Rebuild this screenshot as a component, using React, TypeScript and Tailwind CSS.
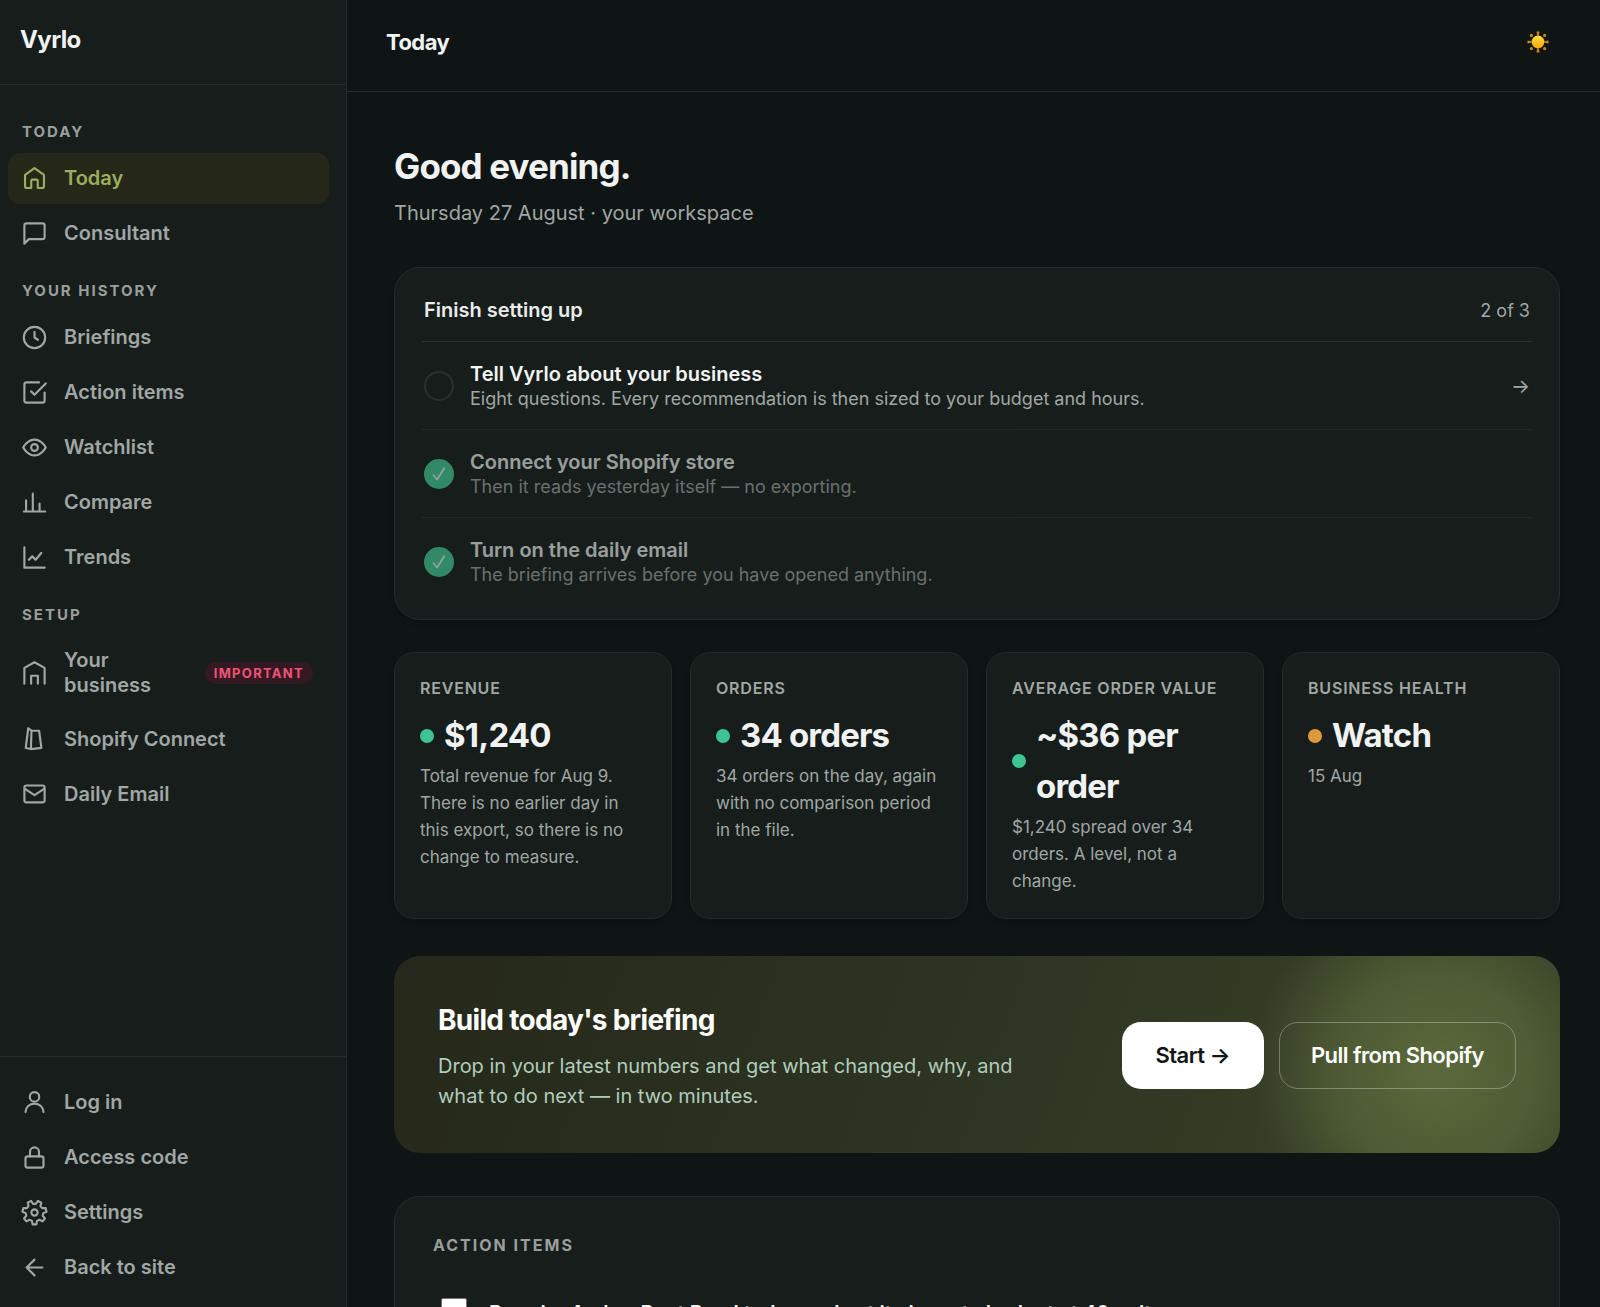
import type { ReactNode } from "react";

type NavItem = {
  label: string;
  icon: ReactNode;
  active?: boolean;
  badge?: string;
};

type NavGroup = {
  title: string;
  items: NavItem[];
};

type SetupStep = {
  title: string;
  text: string;
  done: boolean;
};

type Stat = {
  label: string;
  value: string;
  text: string;
  tone: "good" | "watch";
};

// closed outline of a seven-tooth gear, one tooth pointing down
function gearPath(teeth = 7) {
  const points: string[] = [];

  for (let i = 0; i < teeth; i++) {
    const middle = 90 + (i * 360) / teeth;
    for (const [offset, radius] of [
      [-17, 7.8],
      [-9, 10.7],
      [9, 10.7],
      [17, 7.8],
    ]) {
      const angle = ((middle + offset) * Math.PI) / 180;
      points.push(`${(12 + radius * Math.cos(angle)).toFixed(2)} ${(12 + radius * Math.sin(angle)).toFixed(2)}`);
    }
  }

  return `M${points.join("L")}z`;
}

function Icon({ children }: { children: ReactNode }) {
  return (
    <svg
      viewBox="0 0 24 24"
      className="size-[27px] shrink-0"
      fill="none"
      stroke="currentColor"
      strokeWidth={1.9}
      strokeLinecap="round"
      strokeLinejoin="round"
      aria-hidden="true"
    >
      {children}
    </svg>
  );
}

const NAV_GROUPS: NavGroup[] = [
  {
    title: "Today",
    items: [
      {
        label: "Today",
        active: true,
        icon: (
          <Icon>
            <path d="M3.6 8.700 12 2.800l8.400 5.900v10.100a1.600 1.600 0 0 1-1.600 1.600h-3.900V14a1 1 0 0 0-1-1h-3.800a1 1 0 0 0-1 1v6.400H5.200a1.600 1.600 0 0 1-1.600-1.600z" />
          </Icon>
        ),
      },
      {
        label: "Consultant",
        icon: (
          <Icon>
            <path d="M21 15a2 2 0 0 1-2 2H7l-4 4V5a2 2 0 0 1 2-2h14a2 2 0 0 1 2 2z" />
          </Icon>
        ),
      },
    ],
  },
  {
    title: "Your history",
    items: [
      {
        label: "Briefings",
        icon: (
          <Icon>
            <circle cx="12" cy="12" r="9.5" />
            <path d="M12 7v5l3 2" />
          </Icon>
        ),
      },
      {
        label: "Action items",
        icon: (
          <Icon>
            <path d="m9 11 3 3L22 4" />
            <path d="M21 12v7a2 2 0 0 1-2 2H5a2 2 0 0 1-2-2V5a2 2 0 0 1 2-2h11" />
          </Icon>
        ),
      },
      {
        label: "Watchlist",
        icon: (
          <Icon>
            <path d="M2 12s3.6-7 10-7 10 7 10 7-3.6 7-10 7-10-7-10-7z" />
            <circle cx="12" cy="12" r="3" />
          </Icon>
        ),
      },
      {
        label: "Compare",
        icon: (
          <Icon>
            <path d="M2.5 20h19M4.5 20V10M10.5 20V4M16.5 20v-7" />
          </Icon>
        ),
      },
      {
        label: "Trends",
        icon: (
          <Icon>
            <path d="M3 3v18h18" />
            <path d="m7 14 3-3 3 3 5-6" />
          </Icon>
        ),
      },
    ],
  },
  {
    title: "Setup",
    items: [
      {
        label: "Your business",
        badge: "Important",
        icon: (
          <Icon>
            <path d="M3 21V7l9-5 9 5v14" />
            <path d="M9 21v-7h6v7" />
          </Icon>
        ),
      },
      {
        label: "Shopify Connect",
        icon: (
          <Icon>
            <path d="M6.4 2 4.2 19.6l4.6.9 9.3-1-2-15.3H9.3z" />
            <path d="M9.3 4.2 8.8 20.5" />
          </Icon>
        ),
      },
      {
        label: "Daily Email",
        icon: (
          <Icon>
            <rect x="3" y="4" width="18" height="15" rx="2" />
            <path d="m3.5 7 8.5 5.500 8.500-5.500" />
          </Icon>
        ),
      },
    ],
  },
];

const FOOTER_ITEMS: NavItem[] = [
  {
    label: "Log in",
    icon: (
      <Icon>
        <circle cx="12" cy="7" r="4.200" />
        <path d="M4 20.500c0-4.400 3.600-7.500 8-7.500s8 3.100 8 7.500" />
      </Icon>
    ),
  },
  {
    label: "Access code",
    icon: (
      <Icon>
        <rect x="4" y="11" width="16" height="10" rx="2" />
        <path d="M8 11V7a4 4 0 0 1 8 0v4" />
      </Icon>
    ),
  },
  {
    label: "Settings",
    icon: (
      <Icon>
        <circle cx="12" cy="12" r="2.8" />
        <path d={gearPath()} />
      </Icon>
    ),
  },
  {
    label: "Back to site",
    icon: (
      <Icon>
        <path d="M19 12H5M12 19l-7-7 7-7" />
      </Icon>
    ),
  },
];

const STEPS: SetupStep[] = [
  {
    title: "Tell Vyrlo about your business",
    text: "Eight questions. Every recommendation is then sized to your budget and hours.",
    done: false,
  },
  {
    title: "Connect your Shopify store",
    text: "Then it reads yesterday itself — no exporting.",
    done: true,
  },
  {
    title: "Turn on the daily email",
    text: "The briefing arrives before you have opened anything.",
    done: true,
  },
];

const STATS: Stat[] = [
  {
    label: "Revenue",
    value: "$1,240",
    text: "Total revenue for Aug 9. There is no earlier day in this export, so there is no change to measure.",
    tone: "good",
  },
  {
    label: "Orders",
    value: "34 orders",
    text: "34 orders on the day, again with no comparison period in the file.",
    tone: "good",
  },
  {
    label: "Average order value",
    value: "~$36 per order",
    text: "$1,240 spread over 34 orders. A level, not a change.",
    tone: "good",
  },
  { label: "Business health", value: "Watch", text: "15 Aug", tone: "watch" },
];

function NavLink({ item }: { item: NavItem }) {
  return (
    <a
      href="#"
      className={`flex items-center gap-4 rounded-xl py-3 pr-4 pl-[13px] text-xl leading-[25px] font-semibold ${
        item.active ? "bg-[#252818] text-[#9cad5e]" : "text-[#a0a7a4]"
      }`}
    >
      {item.icon}
      <span className="flex-1">{item.label}</span>
      {item.badge && (
        <span className="rounded-full bg-[#351922] px-[9px] text-[13px] leading-[22px] font-bold tracking-widest text-[#ee5478] uppercase">
          {item.badge}
        </span>
      )}
    </a>
  );
}

function Sidebar() {
  return (
    <aside className="flex w-[347px] shrink-0 flex-col border-r border-[#272d2c] bg-[#171d1b]">
      <div className="border-b border-[#272d2c] px-5 pt-6 pb-[29px] text-2xl leading-[31px] font-bold tracking-tight text-[#f0f3f2]">
        Vyrlo
      </div>

      <nav className="flex-1 overflow-hidden pt-[15px] pr-[17px] pl-2">
        {NAV_GROUPS.map((group) => (
          <div key={group.title}>
            <h2 className="px-[14px] pt-[22px] pb-[11px] text-[15px] leading-5 font-bold tracking-[2px] text-[#9a9f9d] uppercase">
              {group.title}
            </h2>
            <div className="flex flex-col gap-1">
              {group.items.map((item) => (
                <NavLink key={item.label} item={item} />
              ))}
            </div>
          </div>
        ))}
      </nav>

      <div className="flex flex-col gap-1 border-t border-[#272d2c] pt-5 pr-[17px] pb-[14px] pl-2">
        {FOOTER_ITEMS.map((item) => (
          <NavLink key={item.label} item={item} />
        ))}
      </div>
    </aside>
  );
}

function Sun() {
  return (
    <svg viewBox="0 0 24 24" className="size-6" aria-hidden="true">
      <defs>
        <linearGradient id="sun" x1="0" y1="0" x2="0" y2="1">
          <stop offset="0" stopColor="#ffe23a" />
          <stop offset="1" stopColor="#f7a416" />
        </linearGradient>
      </defs>
      <g fill="#c98712">
        <path d="M10.5 1.5h3l-.7 4h-1.6zM10.5 22.5h3l-.7-4h-1.6zM1.5 10.5v3l4-.7v-1.6zM22.5 10.5v3l-4-.7v-1.6z" />
        <circle cx="5.4" cy="5.4" r="1.6" />
        <circle cx="18.6" cy="5.4" r="1.6" />
        <circle cx="5.4" cy="18.6" r="1.6" />
        <circle cx="18.6" cy="18.6" r="1.6" />
      </g>
      <circle cx="12" cy="12" r="6.4" fill="url(#sun)" />
    </svg>
  );
}

function StepMark({ done }: { done: boolean }) {
  if (!done) {
    return <span className="size-[30px] shrink-0 rounded-full border-2 border-[#2b3130]" />;
  }

  return (
    <span className="flex size-[30px] shrink-0 items-center justify-center rounded-full bg-[#44d19c] text-[#e6fff4]">
      <svg viewBox="0 0 14 14" className="size-[14px]" fill="none" stroke="currentColor" strokeWidth={1.7} strokeLinecap="round" strokeLinejoin="round">
        <path d="M1.5 8.2 5 12.5 12.3 1.2" />
      </svg>
    </span>
  );
}

function SetupCard() {
  return (
    <section className="mt-[39px] rounded-[26px] border border-[#262c2b] bg-[#171d1b] px-[27px] pt-7 pb-[14px] shadow-md">
      <div className="flex items-center justify-between px-[2px] pb-4">
        <h2 className="text-xl leading-[29px] font-semibold text-[#e9eceb]">Finish setting up</h2>
        <span className="text-lg leading-[29px] text-[#a0a7a4]">2 of 3</span>
      </div>
      <ul>
        {STEPS.map((step) => (
          <li key={step.title} className={`border-t border-[#2b3130] ${step.done ? "opacity-60" : ""}`}>
            <a href="#" className="flex items-center gap-4 px-[2px] pt-[19px] pb-[18px]">
              <StepMark done={step.done} />
              <span className="flex-1">
                <span className="block text-xl leading-[26px] font-semibold text-[#f2f5f4]">{step.title}</span>
                <span className="block text-lg leading-6 text-[#a0a7a4]">{step.text}</span>
              </span>
              {!step.done && <span className="text-xl leading-6 text-[#a0a7a4]">→</span>}
            </a>
          </li>
        ))}
      </ul>
    </section>
  );
}

function StatCard({ stat }: { stat: Stat }) {
  return (
    <div className="rounded-[20px] border border-[#262c2b] bg-[#171d1b] px-[25px] pt-[25px] pb-[23px] shadow-md">
      <h3 className="text-base leading-5 font-semibold tracking-wider text-[#a0a7a4] uppercase">{stat.label}</h3>
      <p className="mt-3 flex items-center gap-[10px] text-[33px] leading-[51px] font-bold tracking-tight text-[#f0f3f2]">
        <span className={`size-[14px] shrink-0 rounded-full ${stat.tone === "good" ? "bg-[#3dc492]" : "bg-[#de9b3d]"}`} />
        <span>{stat.value}</span>
      </p>
      <p className="mt-[2px] text-[17px] leading-[27px] text-[#a0a7a4]">{stat.text}</p>
    </div>
  );
}

function BriefingBanner() {
  return (
    <section className="mt-[37px] flex items-center justify-between gap-8 rounded-[26px] bg-[radial-gradient(circle_at_calc(100%-128px)_58%,rgba(150,172,92,0.38),rgba(150,172,92,0.24)_100px,rgba(150,172,92,0)_180px),linear-gradient(110deg,#25281a,#2e3422_50%,#3a4529)] px-11 pt-[43px] pb-[42px]">
      <div className="max-w-[600px]">
        <h2 className="text-[28px] leading-[42px] font-bold tracking-tight text-white">Build today's briefing</h2>
        <p className="mt-[10px] text-xl leading-[30px] text-[#b0cdbd]">
          Drop in your latest numbers and get what changed, why, and what to do next — in two minutes.
        </p>
      </div>
      <div className="flex shrink-0 gap-[15px]">
        <button type="button" className="rounded-[19px] bg-white px-[34px] py-[17px] text-[22px] leading-[33px] font-semibold tracking-tight text-[#101615]">
          Start →
        </button>
        <button
          type="button"
          className="rounded-[19px] border border-white/30 px-[31px] py-4 text-[22px] leading-[33px] font-semibold tracking-tight text-white"
        >
          Pull from Shopify
        </button>
      </div>
    </section>
  );
}

function ActionItems() {
  return (
    <section className="mt-[43px] rounded-[26px] border border-[#262c2b] bg-[#171d1b] px-[38px] pt-[38px] pb-10">
      <h2 className="text-base leading-5 font-bold tracking-[2px] text-[#9a9f9d] uppercase">Action items</h2>
      <label className="mt-[39px] flex items-start gap-[22px] px-2 text-xl leading-[38px] font-semibold text-[#f0f3f2]">
        <input type="checkbox" className="mt-1 size-[26px] shrink-0 appearance-none rounded-[2px] border border-[#767676] bg-white" />
        <span>Reorder Amber Root Bead today and set it closer to budget at 40 units</span>
      </label>
    </section>
  );
}

export default function App() {
  return (
    <div className="flex h-screen overflow-hidden bg-[#0f1414] font-['Inter',sans-serif] text-[#f0f3f2]">
      <Sidebar />
      <div className="flex min-w-0 flex-1 flex-col">
        <header className="flex shrink-0 items-center justify-between border-b border-[#272d2c] pt-6 pr-[50px] pb-[31px] pl-[39px]">
          <h1 className="text-[22px] leading-9 font-bold tracking-tight">Today</h1>
          <button type="button" aria-label="Toggle theme">
            <Sun />
          </button>
        </header>
        <main className="min-h-0 flex-1 overflow-hidden pt-[50px] pr-10 pl-[47px]">
          <h2 className="text-[35px] leading-[48px] font-bold tracking-tight">Good evening.</h2>
          <p className="mt-2 text-xl leading-[30px] text-[#a0a7a4]">Thursday 27 August · your workspace</p>
          <SetupCard />
          <div className="mt-8 grid grid-cols-4 gap-[18px]">
            {STATS.map((stat) => (
              <StatCard key={stat.label} stat={stat} />
            ))}
          </div>
          <BriefingBanner />
          <ActionItems />
        </main>
      </div>
    </div>
  );
}
